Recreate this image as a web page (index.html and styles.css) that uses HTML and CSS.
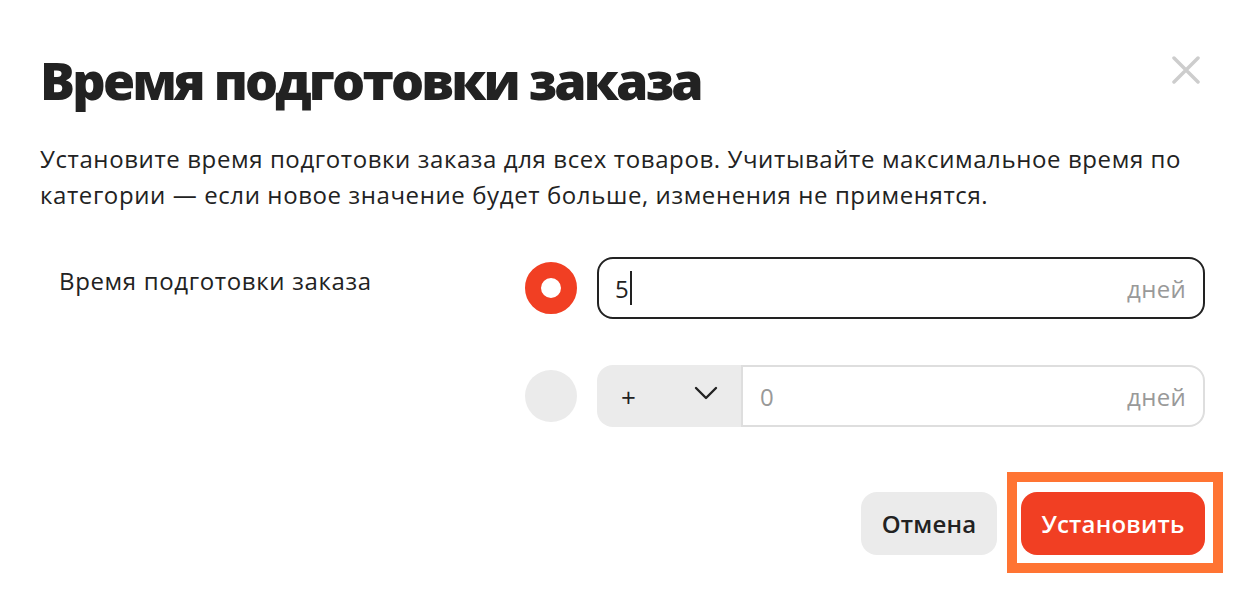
FILE: index.html
```html
<!DOCTYPE html>
<html lang="ru">
<head>
<meta charset="utf-8">
<title>Время подготовки заказа</title>
<link rel="stylesheet" href="styles.css">
</head>
<body>
<div class="dialog">
  <div class="header">
    <h1 class="title">Время подготовки заказа</h1>
    <button class="close" aria-label="Закрыть">
      <svg width="28" height="28" viewBox="0 0 28 28"><path d="M2 2 L26 26 M26 2 L2 26" stroke="#cdcdcd" stroke-width="3.5" stroke-linecap="round" fill="none"/></svg>
    </button>
  </div>
  <p class="desc">Установите время подготовки заказа для всех товаров. Учитывайте максимальное время по категории — если новое значение будет больше, изменения не применятся.</p>
  <div class="form">
    <div class="label">Время подготовки заказа</div>
    <div class="radio radio-on"></div>
    <div class="field field-active">
      <span class="value">5</span><span class="caret"></span>
      <span class="unit">дней</span>
    </div>

    <div class="label"></div>
    <div class="radio radio-off"></div>
    <div class="group">
      <div class="select">
        <span class="plus">+</span>
        <svg class="chev" width="24" height="14" viewBox="0 0 24 14"><path d="M2 2 L12 12 L22 2" stroke="#222" stroke-width="2.4" fill="none" stroke-linecap="round" stroke-linejoin="round"/></svg>
      </div>
      <div class="field field-plain">
        <span class="value muted">0</span>
        <span class="unit">дней</span>
      </div>
    </div>
  </div>
  <div class="actions">
    <button class="btn btn-secondary">Отмена</button>
    <div class="highlight">
      <button class="btn btn-primary">Установить</button>
    </div>
  </div>
</div>
</body>
</html>
```

FILE: styles.css
```css
* { box-sizing: border-box; }
html, body { margin: 0; background: #fff; }
body {
  font-family: "Open Sans", "Noto Sans", sans-serif;
  color: #222;
  width: 1257px;
  height: 610px;
  overflow: hidden;
}
.dialog {
  padding: 49px 52px 0 40px;
}
.header {
  display: flex;
  justify-content: space-between;
  align-items: flex-start;
}
.title {
  margin: 0;
  font-size: 52px;
  line-height: 62px;
  font-weight: 800;
  letter-spacing: -2.8px;
  color: #222;
}
.close {
  margin: 7px 5px 0 0;
  padding: 0;
  border: 0;
  background: none;
  width: 28px;
  height: 28px;
  display: block;
}
.close svg { display: block; }
.desc {
  margin: 30px 0 0 0;
  font-size: 24px;
  line-height: 36px;
  letter-spacing: 0.6px;
  color: #222;
}
.form {
  margin-top: 44px;
  display: grid;
  grid-template-columns: 465px 52px 1fr;
  column-gap: 20px;
  row-gap: 46px;
  align-items: center;
}
.label {
  align-self: start;
  padding-left: 19px;
  margin-top: 6px;
  font-size: 24px;
  line-height: 36px;
  letter-spacing: 0.65px;
  color: #222;
}
.radio {
  width: 52px;
  height: 52px;
  border-radius: 50%;
}
.radio-on {
  border: 16px solid #f13f23;
  background: #fff;
}
.radio-off {
  background: #ebebeb;
}
.field {
  height: 62px;
  display: flex;
  align-items: center;
  font-size: 24px;
  letter-spacing: 0.3px;
}
.field-active {
  border: 2px solid #222;
  border-radius: 16px;
  padding: 0 17px 0 16px;
}
.value { color: #222; }
.value.muted { color: #999; }
.caret {
  display: inline-block;
  width: 1.5px;
  height: 34px;
  background: #222;
  margin-left: 1px;
}
.unit {
  margin-left: auto;
  color: #999;
}
.group {
  display: flex;
  height: 62px;
}
.select {
  width: 144px;
  flex: none;
  background: #ebebeb;
  border-radius: 16px 0 0 16px;
  display: flex;
  align-items: center;
  padding: 0 23px 0 24px;
}
.plus {
  font-size: 26px;
  line-height: 1;
  color: #222;
  margin-top: 2px;
}
.chev {
  display: block;
  margin-left: auto;
  margin-top: -7px;
}
.field-plain {
  flex: 1;
  border: 2px solid #dedede;
  border-radius: 0 16px 16px 0;
  padding: 0 17px 0 17px;
}
.actions {
  margin-top: 65px;
  display: flex;
  justify-content: flex-end;
  gap: 24px;
}
.btn {
  height: 63px;
  border: 0;
  border-radius: 16px;
  font-family: "Open Sans", "Noto Sans", sans-serif;
  font-size: 24px;
  font-weight: 600;
  letter-spacing: 0.2px;
  padding: 0;
  cursor: pointer;
}
.btn-secondary {
  width: 136px;
  background: #ebebeb;
  color: #222;
}
.btn-primary {
  width: 184px;
  background: #f13f23;
  color: #fff;
  display: block;
}
.highlight {
  position: relative;
}
.highlight::after {
  content: "";
  position: absolute;
  left: -14px;
  right: -18px;
  top: -20px;
  bottom: -18px;
  border: 10px solid #ff7433;
  pointer-events: none;
}
```
